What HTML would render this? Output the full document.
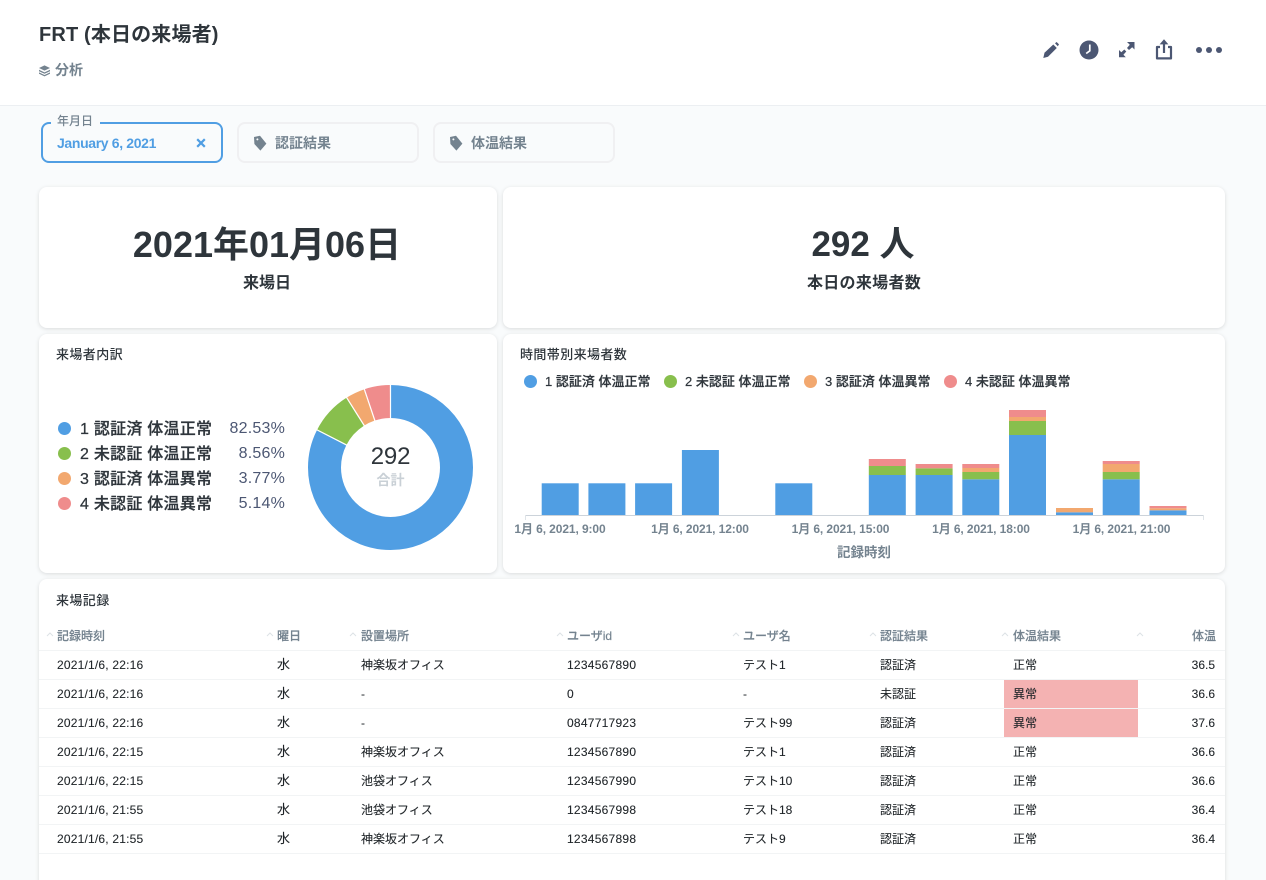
<!DOCTYPE html>
<html lang="ja"><head><meta charset="utf-8"><title>FRT</title>
<style>
*{box-sizing:border-box}
html,body{margin:0;padding:0;width:1266px;height:880px;overflow:hidden}
body{background:#f9fbfc;font-family:"Liberation Sans","Noto Sans CJK JP",sans-serif;color:#2e353b}
#p{position:absolute;left:0;top:0;width:1266px;height:880px;overflow:hidden}
.a{position:absolute;white-space:nowrap}
.c{position:absolute;white-space:nowrap;transform:translateX(-50%);text-align:center}
.card{position:absolute;background:#fff;border-radius:8px;box-shadow:0 1px 4px rgba(0,0,0,.13)}
.f{position:absolute;top:122px;height:41px;width:182px;border:2px solid #f0f0f2;border-radius:8px}
.ft{position:absolute;top:133px;line-height:20px;font-size:14px;font-weight:700;color:#74838f}
.lg{position:absolute;width:13px;height:13px;border-radius:50%}
.lt{position:absolute;left:80px;line-height:20px;font-size:16px;font-weight:500;letter-spacing:.25px;color:#2e353b;white-space:nowrap;-webkit-text-stroke:.25px #2e353b}
.lp{position:absolute;right:981px;line-height:20px;font-size:16px;letter-spacing:.2px;color:#4c5773;white-space:nowrap}
.bt{position:absolute;top:372px;line-height:20px;font-size:13px;font-weight:500;color:#2e353b;white-space:nowrap;-webkit-text-stroke:.2px #2e353b}
.tk{position:absolute;top:519px;line-height:20px;font-size:12px;font-weight:700;letter-spacing:-.1px;color:#74838f;white-space:nowrap;transform:translateX(-50%)}
.th{position:absolute;top:626px;line-height:20px;font-size:12px;font-weight:500;color:#74838f;white-space:nowrap;-webkit-text-stroke:.15px #74838f}
.r{position:absolute;left:39px;width:1186px;height:29px;border-bottom:1px solid #f2f4f5;font-size:12px;font-weight:400;line-height:28px;color:#1f2428;-webkit-text-stroke:.1px #1f2428}
.r span{position:absolute;top:0;white-space:nowrap}
.r .d{left:18px;letter-spacing:.2px}.r .w{left:238px;font-size:13px}.r .p{left:322px}.r .u{left:528px;letter-spacing:.25px}.r .n{left:704px}.r .s{left:841px}.r .k{left:974px}.r .v{right:10px}
</style></head><body><div id="p">
<div class="a" style="left:0;top:0;width:1266px;height:106px;background:#fff;border-bottom:1px solid #eceff2"></div>
<div class="a" style="left:39px;top:21px;line-height:28px;font-size:20px;font-weight:700;color:#2e353b;letter-spacing:.15px">FRT (本日の来場者)</div>
<svg class="a" style="left:39px;top:65px" width="12" height="12" viewBox="0 0 12 12" fill="#74838f"><path d="M5.5 0.4 11 3 5.5 5.6 0 3z"/><path d="M0 4.8 5.5 7.4 11 4.8 11 6.2 5.5 8.8 0 6.2z"/><path d="M0 7.4 5.5 10 11 7.4 11 8.8 5.5 11.4 0 8.8z"/></svg>
<div class="a" style="left:55px;top:60px;line-height:20px;font-size:14px;font-weight:700;color:#74838f">分析</div>

<svg class="a" style="left:1030px;top:30px" width="210" height="40" viewBox="1030 30 210 40" fill="#4c5773">
<path d="M1043.3 58 1044.5 52.8 1053.3 44.5 1056.8 48 1048 56.8z"/><path d="M1055 43.2 1056.6 42 1059 44.4 1057.8 46.2z"/>
<circle cx="1089" cy="50" r="9.5"/><path d="M1089.8 44.5V50.8L1086.2 53.5" fill="none" stroke="#fff" stroke-width="1.7"/>
<path d="M1127 42H1134.5V49.5L1132.2 47.2 1129 50 1127 48 1129.8 44.7z"/><path d="M1119 57.3V50L1121.3 52.3 1124.3 49.5 1126.3 51.5 1123.4 54.8 1125.8 57.3z"/>
<path d="M1160 47H1157V58.4H1171V47H1168" fill="none" stroke="#4c5773" stroke-width="2.2" stroke-linejoin="round"/><path d="M1164 41V53" fill="none" stroke="#4c5773" stroke-width="2.2"/><path d="M1164 39.2 1168.4 44.4H1159.6z"/>
<circle cx="1199" cy="50" r="3"/><circle cx="1209" cy="50" r="3"/><circle cx="1219" cy="50" r="3"/>
</svg>

<div class="f" style="left:41px;border-color:#509ee3"></div>
<div class="a" style="left:51px;top:116px;height:10px;width:49px;background:#f9fbfc"></div>
<div class="a" style="left:57px;top:111px;line-height:20px;font-size:12px;font-weight:500;color:#74838f">年月日</div>
<div class="a" style="left:57px;top:133px;line-height:20px;font-size:14px;font-weight:700;color:#509ee3;letter-spacing:-.35px">January 6, 2021</div>
<svg class="a" style="left:196px;top:138px" width="10" height="10" viewBox="0 0 10 10"><path d="M1.2 1.2 8.8 8.8M8.8 1.2 1.2 8.8" stroke="#509ee3" stroke-width="2.2"/></svg>
<div class="f" style="left:237px"></div>
<svg class="a" style="left:253px;top:135px" width="14" height="16" viewBox="0 0 14 16" fill="#74838f"><path fill-rule="evenodd" d="M1 2 7 .8 13.4 8.6 7.4 15.6 1.4 9zM4.4 3.4a1 1 0 1 0 .01 0z"/></svg>
<div class="ft" style="left:275px">認証結果</div>
<div class="f" style="left:433px"></div>
<svg class="a" style="left:449px;top:135px" width="14" height="16" viewBox="0 0 14 16" fill="#74838f"><path fill-rule="evenodd" d="M1 2 7 .8 13.4 8.6 7.4 15.6 1.4 9zM4.4 3.4a1 1 0 1 0 .01 0z"/></svg>
<div class="ft" style="left:471px">体温結果</div>

<div class="card" style="left:39px;top:187px;width:458px;height:141px"></div>
<div class="card" style="left:503px;top:187px;width:722px;height:141px"></div>
<div class="card" style="left:39px;top:334px;width:458px;height:239px"></div>
<div class="card" style="left:503px;top:334px;width:722px;height:239px"></div>
<div class="card" style="left:39px;top:579px;width:1186px;height:320px"></div>

<div class="c" style="left:267px;top:221px;line-height:48px;font-size:36px;font-weight:700;color:#2e353b">2021年01月06日</div>
<div class="c" style="left:267px;top:273px;line-height:22px;font-size:16px;font-weight:700;color:#2e353b">来場日</div>
<div class="c" style="left:863px;top:221px;line-height:48px;font-size:35px;font-weight:700;color:#2e353b">292 人</div>
<div class="c" style="left:864px;top:273px;line-height:22px;font-size:16px;font-weight:700;letter-spacing:.3px;color:#2e353b">本日の来場者数</div>

<div class="a" style="left:56px;top:345px;line-height:20px;font-size:13px;font-weight:500;color:#2e353b;letter-spacing:.4px">来場者内訳</div>
<div class="lg" style="left:58px;top:422px;background:#509ee3"></div>
<div class="lg" style="left:58px;top:447px;background:#88bf4d"></div>
<div class="lg" style="left:58px;top:472px;background:#f2a86f"></div>
<div class="lg" style="left:58px;top:497px;background:#ef8c8c"></div>
<div class="lt" style="top:420px">1 認証済 体温正常</div>
<div class="lt" style="top:445px">2 未認証 体温正常</div>
<div class="lt" style="top:470px">3 認証済 体温異常</div>
<div class="lt" style="top:495px">4 未認証 体温異常</div>
<div class="lp" style="top:419px">82.53%</div>
<div class="lp" style="top:444px">8.56%</div>
<div class="lp" style="top:469px">3.77%</div>
<div class="lp" style="top:494px">5.14%</div>

<svg class="a" style="left:300px;top:377px" width="181" height="181" viewBox="0 0 181 181" fill="none" stroke-width="33">
<g transform="rotate(-90 90.5 90.5)">
<circle cx="90.5" cy="90.5" r="66" pathLength="100" stroke="#509ee3" stroke-dasharray="82.53 17.47"/>
<circle cx="90.5" cy="90.5" r="66" pathLength="100" stroke="#88bf4d" stroke-dasharray="8.56 91.44" stroke-dashoffset="-82.53"/>
<circle cx="90.5" cy="90.5" r="66" pathLength="100" stroke="#f2a86f" stroke-dasharray="3.77 96.23" stroke-dashoffset="-91.09"/>
<circle cx="90.5" cy="90.5" r="66" pathLength="100" stroke="#ef8c8c" stroke-dasharray="5.14 94.86" stroke-dashoffset="-94.86"/>
</g>
<g stroke="#fff" stroke-width="1.2">
<path d="M90.5 7V41"/>
<path d="M16.6 52.6 46.9 68.2"/>
<path d="M46.4 20.2 64.5 49"/>
<path d="M64.2 11.8 75 44"/>
</g>
</svg>
<div class="c" style="left:390.5px;top:441px;line-height:32px;font-size:24px;letter-spacing:-.2px;color:#2e353b">292</div>
<div class="c" style="left:390.5px;top:470px;line-height:20px;font-size:14px;font-weight:700;color:#c9d0d6">合計</div>

<div class="a" style="left:520px;top:345px;line-height:20px;font-size:13px;font-weight:500;color:#2e353b;letter-spacing:.4px">時間帯別来場者数</div>
<div class="lg" style="left:524px;top:375px;background:#509ee3"></div>
<div class="lg" style="left:664px;top:375px;background:#88bf4d"></div>
<div class="lg" style="left:804px;top:375px;background:#f2a86f"></div>
<div class="lg" style="left:944px;top:375px;background:#ef8c8c"></div>
<div class="bt" style="left:545px">1 認証済 体温正常</div>
<div class="bt" style="left:685px">2 未認証 体温正常</div>
<div class="bt" style="left:825px">3 認証済 体温異常</div>
<div class="bt" style="left:965px">4 未認証 体温異常</div>

<svg class="a" style="left:520px;top:400px" width="700" height="125" viewBox="520 400 700 125">
<g fill="#509ee3">
<rect x="541.7" y="483.3" width="37" height="32"/><rect x="588.4" y="483.3" width="37" height="32"/><rect x="635.1" y="483.3" width="37" height="32"/><rect x="681.9" y="450" width="37" height="65.3"/><rect x="775.3" y="483.3" width="37" height="32"/>
<rect x="868.8" y="475" width="37" height="40.3"/><rect x="915.6" y="475" width="37" height="40.3"/><rect x="962.3" y="479.3" width="37" height="36"/><rect x="1009" y="435" width="37" height="80.3"/><rect x="1056" y="512.3" width="37" height="3"/><rect x="1102.7" y="479.3" width="37" height="36"/><rect x="1149.5" y="510.3" width="37" height="5"/>
</g>
<g fill="#88bf4d">
<rect x="868.8" y="466" width="37" height="9"/><rect x="915.6" y="468.3" width="37" height="6.7"/><rect x="962.3" y="472" width="37" height="7.3"/><rect x="1009" y="421" width="37" height="14"/><rect x="1102.7" y="472" width="37" height="7.3"/>
</g>
<g fill="#f2a86f">
<rect x="962.3" y="468" width="37" height="4"/><rect x="1009" y="417" width="37" height="4"/><rect x="1056" y="508" width="37" height="4.3"/><rect x="1102.7" y="464" width="37" height="8"/><rect x="1149.5" y="508.3" width="37" height="2"/>
</g>
<g fill="#ef8c8c">
<rect x="868.8" y="459" width="37" height="7"/><rect x="915.6" y="464" width="37" height="4.3"/><rect x="962.3" y="464" width="37" height="4"/><rect x="1009" y="410" width="37" height="7"/><rect x="1102.7" y="461" width="37" height="3"/><rect x="1149.5" y="506" width="37" height="2.3"/>
</g>
<path d="M525 515.5H1203.5" stroke="#ccd3da" stroke-width="1"/>
<path d="M525.5 515V520M1203.5 515V520" stroke="#dfe4e8" stroke-width="1"/>
</svg>
<div class="tk" style="left:560px">1月 6, 2021, 9:00</div>
<div class="tk" style="left:700px">1月 6, 2021, 12:00</div>
<div class="tk" style="left:840.5px">1月 6, 2021, 15:00</div>
<div class="tk" style="left:981px">1月 6, 2021, 18:00</div>
<div class="tk" style="left:1121.5px">1月 6, 2021, 21:00</div>
<div class="c" style="left:864px;top:543px;line-height:20px;font-size:13.5px;font-weight:700;color:#74838f">記録時刻</div>

<div class="a" style="left:56px;top:591px;line-height:20px;font-size:13px;font-weight:500;color:#2e353b;letter-spacing:.4px">来場記録</div>
<svg class="a" style="left:39px;top:628px" width="1186" height="12" viewBox="39 628 1186 12" fill="none" stroke="#dde2e6" stroke-width="1">
<path d="M47 636l3-3 3 3M267 636l3-3 3 3M350 636l3-3 3 3M557 636l3-3 3 3M733 636l3-3 3 3M870 636l3-3 3 3M1002 636l3-3 3 3M1137 636l3-3 3 3"/>
</svg>
<div class="th" style="left:57px">記録時刻</div>
<div class="th" style="left:277px">曜日</div>
<div class="th" style="left:361px">設置場所</div>
<div class="th" style="left:567px">ユーザid</div>
<div class="th" style="left:743px">ユーザ名</div>
<div class="th" style="left:880px">認証結果</div>
<div class="th" style="left:1013px">体温結果</div>
<div class="th" style="right:50px">体温</div>
<div class="a" style="left:39px;top:650px;width:1186px;height:1px;background:#f2f4f5"></div>
<div class="a" style="left:1004px;top:679px;width:134px;height:58px;background:#f4b2b2"></div>
<div class="a" style="left:1004px;top:708px;width:134px;height:1px;background:#f8caca"></div>

<div class="r" style="top:651px"><span class="d">2021/1/6, 22:16</span><span class="w">水</span><span class="p">神楽坂オフィス</span><span class="u">1234567890</span><span class="n">テスト1</span><span class="s">認証済</span><span class="k">正常</span><span class="v">36.5</span></div>
<div class="r" style="top:680px"><span class="d">2021/1/6, 22:16</span><span class="w">水</span><span class="p">-</span><span class="u">0</span><span class="n">-</span><span class="s">未認証</span><span class="k">異常</span><span class="v">36.6</span></div>
<div class="r" style="top:709px"><span class="d">2021/1/6, 22:16</span><span class="w">水</span><span class="p">-</span><span class="u">0847717923</span><span class="n">テスト99</span><span class="s">認証済</span><span class="k">異常</span><span class="v">37.6</span></div>
<div class="r" style="top:738px"><span class="d">2021/1/6, 22:15</span><span class="w">水</span><span class="p">神楽坂オフィス</span><span class="u">1234567890</span><span class="n">テスト1</span><span class="s">認証済</span><span class="k">正常</span><span class="v">36.6</span></div>
<div class="r" style="top:767px"><span class="d">2021/1/6, 22:15</span><span class="w">水</span><span class="p">池袋オフィス</span><span class="u">1234567990</span><span class="n">テスト10</span><span class="s">認証済</span><span class="k">正常</span><span class="v">36.6</span></div>
<div class="r" style="top:796px"><span class="d">2021/1/6, 21:55</span><span class="w">水</span><span class="p">池袋オフィス</span><span class="u">1234567998</span><span class="n">テスト18</span><span class="s">認証済</span><span class="k">正常</span><span class="v">36.4</span></div>
<div class="r" style="top:825px"><span class="d">2021/1/6, 21:55</span><span class="w">水</span><span class="p">神楽坂オフィス</span><span class="u">1234567898</span><span class="n">テスト9</span><span class="s">認証済</span><span class="k">正常</span><span class="v">36.4</span></div>
</div></body></html>
